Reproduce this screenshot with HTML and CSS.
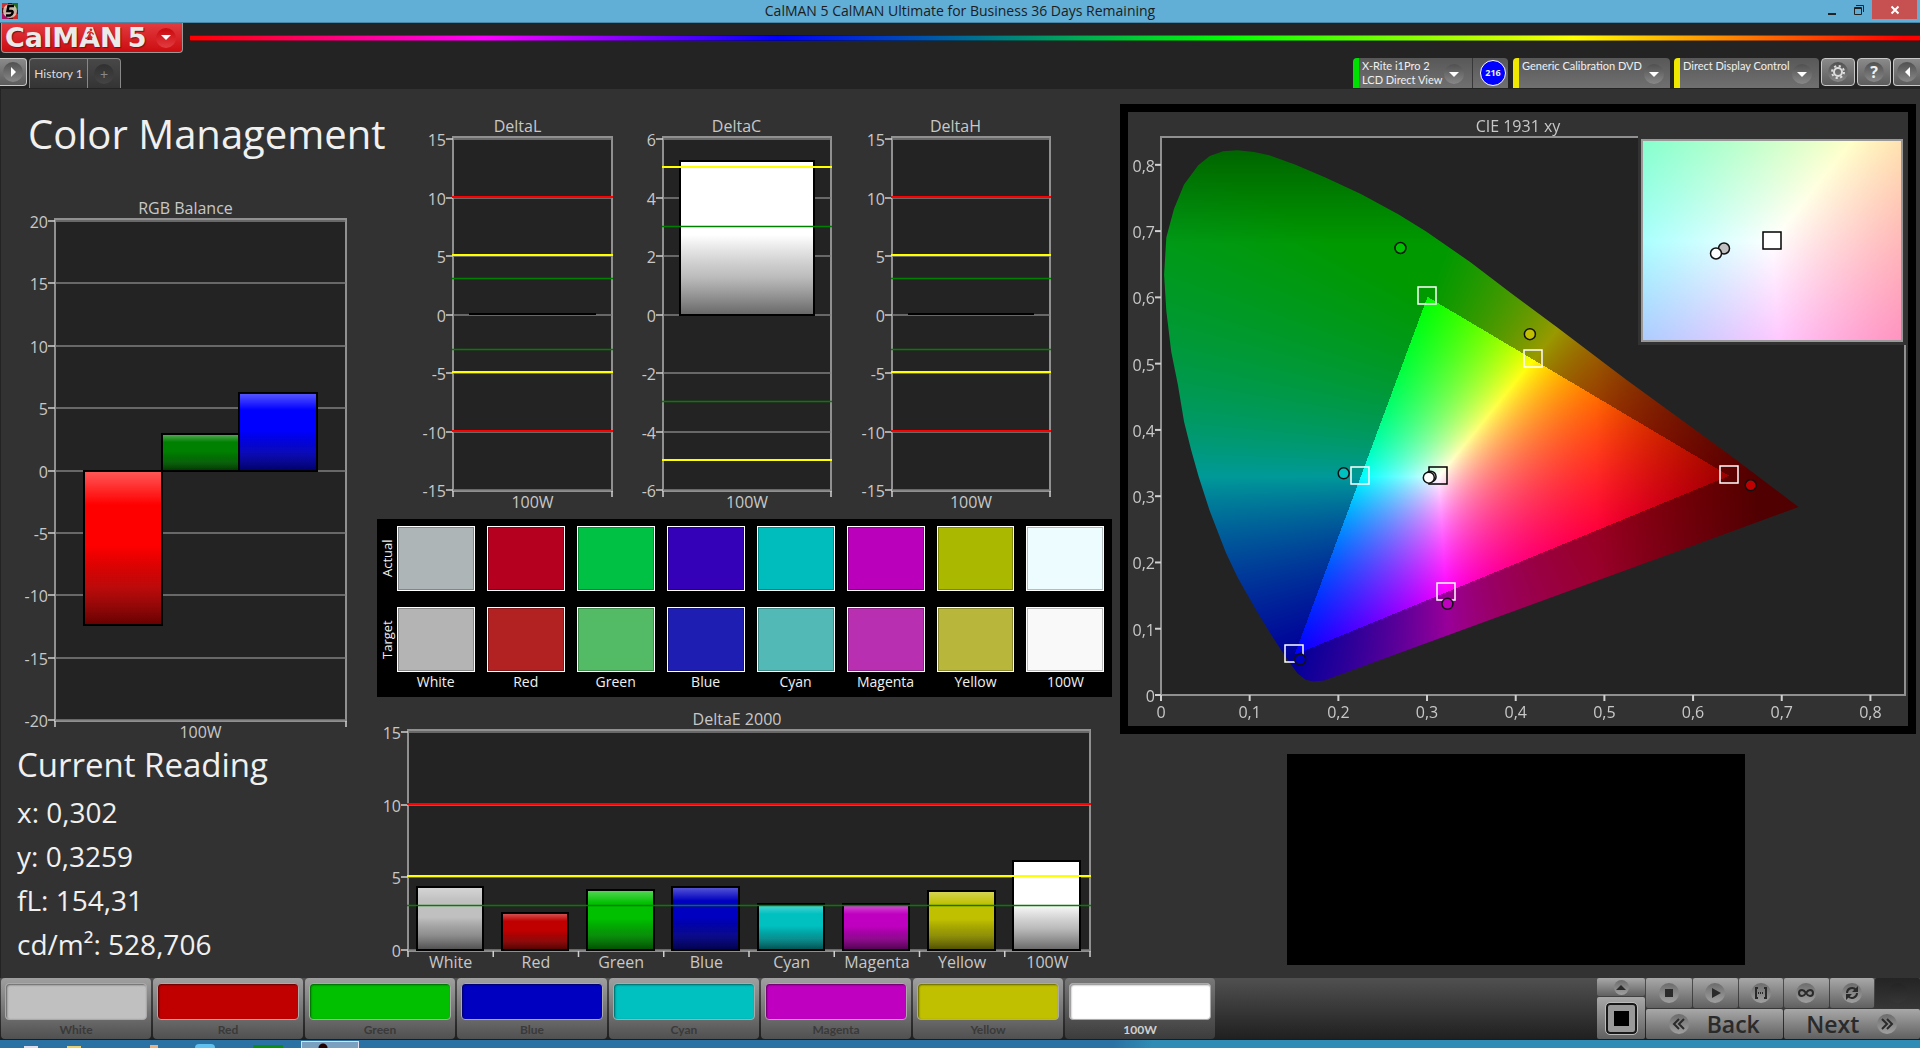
FILE: index.html
```html
<!DOCTYPE html>
<html lang="en">
<head>
    <meta charset="UTF-8">
    <meta name="viewport" content="width=device-width, initial-scale=1.0">
    <title>CalMAN 5 CalMAN Ultimate for Business 36 Days Remaining</title>
    <link rel="stylesheet" href="styles.css">
</head>
<body>

<div class="titlebar">
    <svg class="app-icon" viewBox="0 0 16 16"><rect width="16" height="16" fill="#511"/><path d="M0 0h6v5H0z" fill="#c33"/><path d="M10 0h6v7h-6z" fill="#286b25"/><path d="M0 10h7v6H0z" fill="#a16"/><path d="M11 11h5v5h-5z" fill="#c22"/><circle cx="8" cy="8" r="7" fill="#e8d8c8" opacity=".8"/><path d="M12 3H6.500L5.500 8h4q1.500 0 1 2t-2.500 2.500H4" fill="none" stroke="#000" stroke-width="2.500"/></svg>
    <span class="window-title">CalMAN 5 CalMAN Ultimate for Business 36 Days Remaining</span>
    <div class="window-buttons">
        <button aria-label="Minimize"><svg width="10" height="16"><path d="M1 12h8" stroke="#222" stroke-width="2"/></svg></button>
        <button aria-label="Restore"><svg width="12" height="14"><path d="M1.500 4.500h7v7h-7zM1 5.500h8M3 2.500h7.500V9" fill="none" stroke="#222"/></svg></button>
        <button class="close" aria-label="Close"><svg width="10" height="10"><path d="M1.500 1.500l7 7m0-7l-7 7" stroke="#fff" stroke-width="2"/></svg></button>
    </div>
</div>

<header>
    <div class="brand-row">
        <button class="logo">
            <span class="logo-text">CalMAN</span><span class="logo-text five">5</span>
            <svg class="runner" viewBox="0 0 12 14"><circle cx="7" cy="2" r="1.500" fill="#d42a2a"/><path d="M7 4L5 8l3 2-1 3M5 8l-2 3H1M3 6l2-2 3 1 2 2" fill="none" stroke="#d42a2a" stroke-width="1.500"/></svg>
            <span class="round red"><i class="down"></i></span>
        </button>
        <div class="rainbow"></div>
    </div>
    <div class="tool-row">
        <button class="square-btn side left" aria-label="Open panel"><span class="round"><i class="right"></i></span></button>
        <div class="tabs">
            <button class="tab">History 1</button>
            <button class="tab add" aria-label="Add tab"><span class="round">+</span></button>
        </div>
        <div class="devices">
            <button class="device meter"><span class="device-name">X-Rite i1Pro 2<br>LCD Direct View</span><span class="round"><i class="down"></i></span></button>
            <span class="count"><b>216</b></span>
            <button class="device source"><span class="device-name">Generic Calibration DVD</span><span class="round"><i class="down"></i></span></button>
            <button class="device display"><span class="device-name">Direct Display Control</span><span class="round"><i class="down"></i></span></button>
            <button class="square-btn" aria-label="Settings"><span class="round"><svg width="16" height="16" viewBox="0 0 16 16"><circle cx="8" cy="8" r="4" fill="none" stroke="#ddd" stroke-width="2"/><circle cx="8" cy="8" r="6" fill="none" stroke="#ddd" stroke-width="2" stroke-dasharray="2.200 2.512"/></svg></span></button>
            <button class="square-btn" aria-label="Help"><span class="round help">?</span></button>
            <button class="square-btn side" aria-label="Collapse"><span class="round"><i class="back"></i></span></button>
        </div>
    </div>
</header>

<main>
    <section class="col-left">
        <h1>Color Management</h1>
        <div class="chart" id="rgb"></div>
        <div class="reading">
            <h2>Current Reading</h2>
            <p>x: 0,302</p>
            <p>y: 0,3259</p>
            <p>fL: 154,31</p>
            <p>cd/m²: 528,706</p>
        </div>
    </section>

    <section class="col-mid">
        <div class="deltas">
            <div class="chart" id="deltaL"></div>
            <div class="chart" id="deltaC"></div>
            <div class="chart" id="deltaH"></div>
        </div>
        <div class="swatches" id="swatches">
            <span class="side-label">Actual</span>
        </div>
        <div class="chart" id="deltaE"></div>
    </section>

    <section class="col-right">
        <div class="cie" id="cie">
            <canvas></canvas>
            <div class="inset"><canvas></canvas></div>
        </div>
        <div class="preview"></div>
    </section>
</main>

<footer>
    <div class="patches" id="patches"></div>
    <div class="pattern">
        <button class="pattern-up" aria-label="Show more"><span class="round"><i class="up"></i></span></button>
        <button class="pattern-window" aria-label="Pattern window"><span></span></button>
    </div>
    <div class="controls">
        <div class="transport">
            <button aria-label="Stop"><span class="round"><svg width="20" height="20"><path d="M6 6h8v8H6z" fill="#2a2a2a"/></svg></span></button>
            <button aria-label="Play"><span class="round"><svg width="20" height="20"><path d="M7 5l9 5-9 5z" fill="#2a2a2a"/></svg></span></button>
            <button aria-label="Read series"><span class="round"><svg width="20" height="20"><path d="M7 5H5v10h2M13 5h2v10h-2" fill="none" stroke="#2a2a2a" stroke-width="2"/><path d="M7 10h6" stroke="#2a2a2a" stroke-width="2" stroke-dasharray="1 1"/></svg></span></button>
            <button aria-label="Continuous"><span class="round"><svg width="20" height="20"><path d="M10 10c-2-3-3-3-4-3a3 3 0 0 0 0 6c1 0 2 0 4-3s3-3 4-3a3 3 0 0 1 0 6c-1 0-2 0-4-3z" fill="none" stroke="#2a2a2a" stroke-width="2"/></svg></span></button>
            <button aria-label="Refresh"><span class="round"><svg width="20" height="20"><path d="M5 10a5 5 0 0 1 9-3M15 10a5 5 0 0 1-9 3" fill="none" stroke="#2a2a2a" stroke-width="2"/><path d="M16 3v6h-6zM4 17v-6h6z" fill="#2a2a2a"/></svg></span></button>
            <button class="off" aria-label="Record" disabled><span class="round"></span></button>
        </div>
        <div class="steps">
            <button><span class="round"><svg width="20" height="20"><path d="M10 5l-5 5 5 5M15 5l-5 5 5 5" fill="none" stroke="#2a2a2a" stroke-width="2"/></svg></span>Back</button>
            <button>Next<span class="round"><svg width="20" height="20"><path d="M5 5l5 5-5 5M10 5l5 5-5 5" fill="none" stroke="#2a2a2a" stroke-width="2"/></svg></span></button>
        </div>
    </div>
</footer>

<div class="taskbar">
    <i class="task t1"></i><i class="task t2"></i><i class="task t3"></i><i class="task t4"></i><i class="task t5"></i><i class="task active"></i>
</div>

<script src="script.js"></script>
</body>
</html>
```
FILE: styles.css
```css
* {
    box-sizing: border-box;
}
body {
    margin: 0;
    min-height: 100vh;
    display: flex;
    flex-direction: column;
    overflow: hidden;
    background: #323232;
    color: #f0f0f0;
    font-family: "Open Sans", "Noto Sans", sans-serif;
}
button {
    border: 0;
    margin: 0;
    padding: 0;
    background: none;
    color: inherit;
    font-family: inherit;
}

/* window title */
.titlebar {
    height: 23px;
    display: flex;
    align-items: center;
    background: #61aed6;
    border-bottom: 1px solid #4a86a6;
    padding: 0 3px 0 2px;
}
.app-icon {
    width: 16px;
    height: 16px;
}
.window-title {
    flex: 1;
    text-align: center;
    font-size: 14px;
    line-height: 20px;
    color: #1c1c1c;
    padding-left: 84px;
}
.window-buttons {
    display: flex;
    align-self: flex-start;
    height: 19px;
}
.window-buttons button {
    width: 27px;
    display: flex;
    justify-content: center;
    align-items: center;
}
.window-buttons .close {
    width: 45px;
    background: #c75050;
}

/* header */
header {
    background: #232323;
    height: 66px;
}
.brand-row {
    display: flex;
    gap: 7px;
    height: 35px;
}
.logo {
    position: relative;
    display: flex;
    align-items: center;
    width: 182px;
    height: 30px;
    margin-left: 1px;
    padding: 0 6px 0 3px;
    border: 1px solid #999;
    border-top: 0;
    border-radius: 0 0 4px 4px;
    background: linear-gradient(#e23c40, #cc0c10);
}
.logo-text {
    font: bold 27px/26px "DejaVu Sans", sans-serif;
    color: #eaeaea;
    text-shadow: 1px 1px 1px #7a1010;
}
.five {
    margin-left: 5px;
}
.runner {
    position: absolute;
    left: 82px;
    top: 5px;
    width: 12px;
    height: 13px;
}
.rainbow {
    flex: 1;
    height: 6px;
    margin-top: 12px;
    border-top: 1px solid rgba(0, 0, 0, 0.4);
    border-bottom: 1px solid rgba(0, 0, 0, 0.4);
    background: linear-gradient(90deg, #f00, #f0f 17%, #00f 34%, #0f0 60%, #ff0 80%, #f00 99%);
}
.round {
    display: inline-flex;
    align-items: center;
    justify-content: center;
    flex: none;
    width: 20px;
    height: 20px;
    border-radius: 50%;
    background: linear-gradient(#505050, #888);
}
.round.red {
    margin-left: auto;
    background: linear-gradient(#c8080c, #e23c40);
}
.down, .up, .right, .back {
    border: 5px solid transparent;
}
.down {
    border-top-color: #fff;
    border-bottom: 0;
}
.up {
    border-bottom-color: #2a2a2a;
    border-top: 0;
}
.right {
    border-left-color: #fff;
    border-right: 0;
}
.back {
    border-right-color: #fff;
    border-left: 0;
}
.tool-row {
    display: flex;
    height: 31px;
}
.square-btn {
    width: 34px;
    height: 28px;
    display: flex;
    align-items: center;
    justify-content: center;
    border: 1px solid #c8c8c8;
    border-radius: 4px;
    background: linear-gradient(#8a8a8a, #5c5c5c);
}
.square-btn.side {
    width: 27px;
    border-right: 0;
    border-radius: 4px 0 0 4px;
}
.square-btn.left {
    border-right: 1px solid #c8c8c8;
    border-left: 0;
    border-radius: 0 4px 4px 0;
}
.help {
    font-size: 16px;
    font-weight: bold;
}
.tabs {
    display: flex;
    margin-left: 2px;
    height: 30px;
    border: 1px solid #888;
    border-bottom: 0;
    border-radius: 4px 4px 0 0;
    background: linear-gradient(#484848, #343434);
}
.tab {
    width: 57px;
    font: 12px Lato, sans-serif;
    color: #ddd;
}
.tab.add {
    width: 33px;
    border-left: 1px solid #888;
    color: #888;
    font-size: 14px;
}
.tab.add .round {
    background: linear-gradient(#303030, #444);
}
.devices {
    display: flex;
    margin-left: auto;
    gap: 2px;
}
.device {
    display: flex;
    gap: 2px;
    height: 30px;
    padding: 0 9px 0 3px;
    border-left: 6px solid #f0e800;
    border-radius: 4px 4px 0 0;
    background: linear-gradient(#585858, #707070);
}
.device-name {
    flex: 1;
    font: 11px/14px Lato, sans-serif;
    text-align: left;
    white-space: nowrap;
    padding-top: 1px;
}
.device .round {
    margin-top: 6px;
}
.meter {
    width: 119px;
    padding-right: 12px;
    border-left-color: #00e000;
    border-radius: 4px 0 0 0;
}
.count {
    width: 36px;
    height: 30px;
    margin: 0 3px 0 -2px;
    padding: 2px 0 0 7px;
    border-left: 1px solid #383838;
    border-radius: 0 4px 0 0;
    background: linear-gradient(#585858, #707070);
}
.count b {
    display: block;
    width: 26px;
    height: 26px;
    border: 1px solid #fff;
    border-radius: 50%;
    background: #00f;
    font-size: 9px;
    line-height: 24px;
    text-align: center;
}
.source {
    width: 157px;
    margin-right: 2px;
}
.display {
    width: 145px;
}

/* page */
main {
    flex: 1;
    display: grid;
    grid-template-columns: minmax(0, 370fr) minmax(0, 750fr) minmax(0, 800fr);
    border-left: 1px solid #232323;
}
h1 {
    margin: 18px 0 0;
    padding-left: 27px;
    font-size: 40px;
    line-height: 54px;
    font-weight: normal;
    white-space: nowrap;
}
.chart svg {
    display: block;
    overflow: visible;
}
.chart text, .cie text {
    font-size: 16px;
    fill: #c8c8c8;
}
#rgb {
    margin: 37px 13px 0 12px;
    height: 547px;
}
.reading {
    padding-left: 16px;
}
h2 {
    margin: 0 0 5px;
    font-size: 33px;
    line-height: 40px;
    font-weight: normal;
}
.reading p {
    margin: 0;
    font-size: 28px;
    line-height: 44px;
}
.deltas {
    display: grid;
    grid-template-columns: repeat(3, 1fr);
    margin: 27px 55px 0 37px;
}
.deltas .chart {
    height: 403px;
}
.swatches {
    display: grid;
    grid-template-columns: 7px repeat(8, 1fr);
    column-gap: 12px;
    row-gap: 16px;
    margin: 0 8px 0 6px;
    padding: 7px 8px 5px 1px;
    background: #000;
}
.swatch {
    height: 65px;
    border: 1px solid #fff;
    box-shadow: inset 0 0 0 1px rgba(0, 0, 0, 0.25);
}
.side-label {
    writing-mode: vertical-rl;
    transform: rotate(180deg);
    margin-right: -12px;
    text-align: center;
    font-size: 13px;
    line-height: 18px;
}
.swatch-name {
    margin-top: -16px;
    font-size: 14px;
    line-height: 20px;
    text-align: center;
}
#deltaE {
    height: 269px;
    margin: 12px 27px 0 9px;
}
.col-right {
    padding-right: 4px;
}
.cie {
    position: relative;
    height: 630px;
    margin-top: 15px;
    border: 8px solid #000;
}
.cie > canvas, .cie > svg {
    position: absolute;
    left: 0;
    top: 0;
}
.inset {
    position: absolute;
    right: 2px;
    top: 24px;
    width: 268px;
    height: 209px;
    border: 3px solid #323232;
}
.inset canvas {
    display: block;
    border: 2px solid #999;
}
.inset svg {
    position: absolute;
    left: 0;
    top: 0;
}
.preview {
    width: 458px;
    height: 211px;
    margin: 20px 171px 0 auto;
    background: #000;
}

/* bottom bar */
footer {
    display: flex;
    height: 62px;
    background: linear-gradient(#505050, #202020);
    border-bottom: 1px solid #1c1c1c;
}
.patches {
    flex: 1;
    display: flex;
    gap: 2px;
    padding-left: 1px;
}
.patch {
    width: 150px;
    height: 61px;
    padding: 5px 4px 0;
    border-radius: 4px;
    background: linear-gradient(#a0a0a0, #505050);
    color: #3a3a3a;
    font: bold 12px/20px Lato, sans-serif;
}
.patch span {
    display: block;
    height: 37px;
    border: 1px solid #aaa;
    border-radius: 4px;
    box-shadow: inset 1px 1px 2px rgba(0, 0, 0, 0.5);
}
.patch.selected {
    background: linear-gradient(#787878, #3c3c3c);
    color: #d0d0d0;
}
.pattern {
    width: 48px;
    display: flex;
    flex-direction: column;
    gap: 1px;
    margin-right: 1px;
}
.pattern button, .controls button {
    display: flex;
    align-items: center;
    justify-content: center;
    border-radius: 2px;
    background: linear-gradient(#a8a8a8, #606060);
}
.pattern-up {
    height: 18px;
}
.pattern-up .round {
    width: 15px;
    height: 15px;
}
.pattern-window {
    flex: 1;
}
.pattern-window span {
    width: 31px;
    height: 31px;
    padding: 6px;
    border: 2px solid #181818;
    outline: 1px solid #bbb;
    border-radius: 4px;
    background: #000 content-box;
    box-shadow: inset 0 0 0 6px #999;
}
.controls {
    width: 274px;
    display: flex;
    flex-direction: column;
    gap: 1px;
}
.transport, .steps {
    display: grid;
    gap: 1px;
    height: 30px;
}
.transport {
    grid-template-columns: 46px repeat(5, 1fr);
}
.steps {
    grid-template-columns: 1fr 1fr;
}
.controls .round, .pattern-up .round {
    background: linear-gradient(#6c6c6c, #a0a0a0);
}
.controls .steps button {
    gap: 18px;
    font-size: 23px;
    line-height: 30px;
    font-weight: 600;
    color: #2a2a2a;
}
.controls .off, .controls .off .round {
    background: linear-gradient(#242424, #363636);
}
.taskbar {
    height: 8px;
    display: flex;
    align-items: flex-end;
    overflow: hidden;
    padding-left: 24px;
    background: linear-gradient(100deg, #2a72a4 58%, #2f8cb4 60%);
}
.task {
    width: 14px;
    height: 2px;
    background: #dde;
}
.t2 {
    margin-left: 29px;
    background: #e8d070;
}
.t3 {
    width: 8px;
    height: 3px;
    margin-left: 69px;
    background: #e8b080;
}
.t4 {
    width: 20px;
    height: 4px;
    margin-left: 37px;
    border-radius: 8px 8px 0 0;
    background: #60c0f0;
}
.t5 {
    width: 30px;
    height: 3px;
    margin-left: 38px;
    background: #0a9010;
}
.task.active {
    width: 58px;
    height: 7px;
    margin-left: 18px;
    border: 1px solid #dde;
    border-bottom: 0;
    background: radial-gradient(circle at 21px 6px, #200 4px, #7aa0c0 5px);
}
```
FILE: script.js
```js
const names = ['White', 'Red', 'Green', 'Blue', 'Cyan', 'Magenta', 'Yellow', '100W'];
const colors = ['#c0c0c0', '#c00000', '#00c000', '#0000c0', '#00c0c0', '#c000c0', '#c0c000', '#ffffff'];
const actual = ['#adb5b7', '#b5001f', '#00c144', '#3400b8', '#00bdbd', '#bb00bb', '#abb800', '#ecfcff'];
const target = ['#b4b4b4', '#b22222', '#53bb66', '#1e1eb2', '#53b9b7', '#b82fb2', '#b8b73c', '#f9f9f9'];

const fivePlus = [[10, '#ff0000'], [5, '#ffff00'], [3, '#008000'], [-3, '#008000'], [-5, '#ffff00'], [-10, '#ff0000']];

const charts = {
    rgb: { title: 'RGB Balance', max: 20, min: -20, step: 5, left: 42, right: 12, bottom: 24, cats: ['100W'],
        bars: [[0.1, 0.367, -12.4, '#ff0000'], [0.367, 0.633, 2.9, '#008000'], [0.633, 0.9, 6.2, '#0000ff']], limits: [] },
    deltaL: { title: 'DeltaL', max: 15, min: -15, step: 5, left: 45, right: 15, bottom: 28, cats: ['100W'],
        bars: [[0.1, 0.9, 0, '#000']], limits: fivePlus },
    deltaC: { title: 'DeltaC', max: 6, min: -6, step: 2, left: 36, right: 15, bottom: 28, cats: ['100W'],
        bars: [[0.1, 0.9, 5.25, '#ffffff']], limits: [[5, '#ffff00'], [3, '#008000'], [-3, '#008000'], [-5, '#ffff00']] },
    deltaH: { title: 'DeltaH', max: 15, min: -15, step: 5, left: 46, right: 15, bottom: 28, cats: ['100W'],
        bars: [[0.1, 0.9, 0, '#000']], limits: fivePlus },
    deltaE: { title: 'DeltaE 2000', max: 15, min: 0, step: 5, left: 28, right: 4, bottom: 27, cats: names,
        bars: [4.35, 2.53, 4.15, 4.35, 3.18, 3.18, 4.05, 6.13].map((v, i) => [(i + 0.1) / 8, (i + 0.88) / 8, v, colors[i]]),
        limits: [[10, '#ff0000'], [5, '#ffff00'], [3, '#008000']] }
};

function line(x1, y1, x2, y2, color, w) {
    return `<line x1="${x1}" y1="${y1}" x2="${x2}" y2="${y2}" stroke="${color}" stroke-width="${w}"/>`;
}

function drawChart(id) {
    const c = charts[id];
    const el = document.getElementById(id);
    const W = el.clientWidth, H = el.clientHeight;
    const x0 = c.left, x1 = W - c.right, y0 = 21, y1 = H - c.bottom;
    const Y = v => Math.round(y0 + 2 + (c.max - v) / (c.max - c.min) * (y1 - y0 - 3));
    let s = `<svg width="${W}" height="${H}"><defs><linearGradient id="gloss-${id}" x2="0" y2="1">
        <stop offset="0" stop-color="#fff" stop-opacity=".35"/><stop offset=".22" stop-color="#fff" stop-opacity="0"/>
        <stop offset=".48" stop-color="#000" stop-opacity="0"/><stop offset=".75" stop-color="#222" stop-opacity=".3"/>
        <stop offset="1" stop-color="#000" stop-opacity=".6"/></linearGradient></defs>`;
    s += `<text x="${W / 2}" y="16" text-anchor="middle">${c.title}</text>`;
    s += `<rect x="${x0}" y="${y0}" width="${x1 - x0}" height="${y1 - y0}" fill="#232323" stroke="#909090" stroke-width="2"/>`;
    for (let v = c.max; v >= c.min; v -= c.step) {
        s += line(x0, Y(v), x1, Y(v), '#808080', 1.5) + line(x0 - 7, Y(v), x0, Y(v), '#d0d0d0', 1.5);
        s += `<text x="${x0 - 7}" y="${Y(v) + 7}" text-anchor="end">${v}</text>`;
    }
    for (const [a, b, v, color] of c.bars) {
        const left = Math.round(x0 + a * (x1 - x0)), right = Math.round(x0 + b * (x1 - x0));
        const top = Math.min(Y(v), Y(0)), h = Math.abs(Y(v) - Y(0));
        if (!h) {
            s += line(left, Y(0) - 1, right, Y(0) - 1, '#000', 2);
            continue;
        }
        s += `<rect x="${left}" y="${top}" width="${right - left}" height="${h}" fill="${color}"/>`;
        s += `<rect x="${left}" y="${top}" width="${right - left}" height="${h}" fill="url(#gloss-${id})" stroke="#000" stroke-width="2"/>`;
    }
    for (const [v, color] of c.limits) {
        const thin = v === 3 || v === -3;
        s += line(x0 - 1, Y(v) - (thin ? 0.5 : 1), x1 + 1, Y(v) - (thin ? 0.5 : 1), color, thin ? 1.4 : 2);
    }
    const n = c.cats.length, step = (x1 - x0) / n;
    for (let i = 0; i <= n; i++) {
        s += line(x0 + i * step, y1, x0 + i * step, y1 + 6, '#d0d0d0', 1.5);
    }
    c.cats.forEach((t, i) => {
        s += `<text x="${x0 + (i + 0.5) * step}" y="${y1 + 17}" text-anchor="middle">${t}</text>`;
    });
    el.innerHTML = s + '</svg>';
}

/* chromaticity diagram */
const locus = [[.719, .282], [.641, .361], [.524, .475], [.447, .553], [.396, .6036], [.349, .6516], [.299, .698],
    [.268, .7237], [.226, .754], [.186, .779], [.151, .799], [.122, .813], [.105, .818], [.086, .8205], [.070, .819], [.055, .812],
    [.042, .798], [.026, .769], [.0146, .732], [.006, .689], [.0035, .633], [.006, .578], [.0116, .516], [.019, .467],
    [.026, .411], [.034, .368], [.0425, .328], [.055, .276], [.073, .214], [.086, .177], [.108, .125], [.125, .088],
    [.140, .057], [.154, .031], [.163, .0216], [.172, .019], [.184, .0205]];
const squares = [[.64, .33], [.3, .6], [.15, .06], [.2246, .3287], [.3209, .1542], [.4193, .5053]];
const dots = [[.270, .673, '#00c000'], [.416, .543, '#c0c000'], [.206, .333, '#00c0c0'], [.665, .315, '#c00000'],
    [.323, .136, '#c000c0'], [.157, .052, '#0000c0'], [.304, .328, '#c0c0c0'], [.302, .3265, '#fff']];

function xyColor(x, y) {
    y = Math.max(y, 0.001);
    const X = x / y, Z = (1 - x - y) / y;
    const raw = [3.2406 * X - 1.5372 - 0.4986 * Z, -0.9689 * X + 1.8758 + 0.0415 * Z, 0.0557 * X - 0.2040 + 1.0570 * Z];
    const inside = Math.min(...raw) >= 0;
    const rgb = raw.map(v => Math.max(v, 0));
    const m = Math.max(...rgb);
    let k = inside ? 255 : 153;
    if (x > 0.49) k *= 1 - Math.min((x - 0.49) * 2.6, 0.48);
    if (y > 0.68) k *= 1 - (y - 0.68) * 2.4;
    return rgb.map(v => v / m * k);
}

function paint(canvas, w, h, toXY) {
    canvas.width = w;
    canvas.height = h;
    const ctx = canvas.getContext('2d');
    const img = ctx.createImageData(w, h);
    for (let j = 0; j < h; j++) {
        for (let i = 0; i < w; i++) {
            const c = xyColor(...toXY(i, j));
            const p = (j * w + i) * 4;
            img.data[p] = c[0];
            img.data[p + 1] = c[1];
            img.data[p + 2] = c[2];
            img.data[p + 3] = 255;
        }
    }
    ctx.putImageData(img, 0, 0);
    return ctx;
}

function drawCie() {
    const el = document.getElementById('cie');
    const W = el.clientWidth, H = el.clientHeight;
    const x0 = 33, x1 = W - 3, y0 = 25, y1 = H - 31;
    const X = v => x0 + v / 0.839 * (x1 - x0), Y = v => y1 - 1 - v / 0.842 * (y1 - y0);
    const path = locus.map(p => X(p[0]) + ' ' + Y(p[1]));
    const ctx = paint(el.querySelector('canvas'), W, H, (i, j) => [(i - x0) / (x1 - x0) * 0.839, (y1 - 1 - j) / (y1 - y0) * 0.842]);
    ctx.globalCompositeOperation = 'destination-in';
    ctx.fill(new Path2D('M' + path.join('L') + 'Z'));
    ctx.globalCompositeOperation = 'destination-over';
    ctx.fillStyle = '#232323';
    ctx.fillRect(x0, y0, x1 - x0, y1 - y0);

    let s = `<svg width="${W}" height="${H}"><text x="${W / 2}" y="20" text-anchor="middle">CIE 1931 xy</text>`;
    s += `<rect x="${x0}" y="${y0}" width="${x1 - x0}" height="${y1 - y0}" fill="none" stroke="#909090" stroke-width="2"/>`;
    for (let i = 0; i < 9; i++) {
        const t = i ? '0,' + i : '0';
        s += line(X(i / 10), y1, X(i / 10), y1 + 6, '#d0d0d0', 2) + line(x0 - 6, Y(i / 10) + 1, x0, Y(i / 10) + 1, '#d0d0d0', 2);
        s += `<text x="${X(i / 10)}" y="${y1 + 23}" text-anchor="middle">${t}</text>`;
        s += `<text x="${x0 - 6}" y="${Y(i / 10) + 8}" text-anchor="end">${t}</text>`;
    }
    squares.forEach(p => s += square(X(p[0]), Y(p[1]), '#fff', 'none'));
    s += square(X(.3127), Y(.329), '#000', 'none');
    dots.forEach(p => s += dot(X(p[0]), Y(p[1]), p[2]));
    el.querySelector(':scope > svg')?.remove();
    el.querySelector('canvas').insertAdjacentHTML('afterend', s + '</svg>');

    // zoomed view round the white point
    const inset = el.querySelector('.inset');
    const w = inset.clientWidth - 4, h = inset.clientHeight - 4;
    paint(inset.querySelector('canvas'), w, h, (i, j) => [.3127 + (i - w / 2) / 5250, .329 - (j - h / 2) / 4000]);
    inset.querySelector('svg')?.remove();
    inset.insertAdjacentHTML('beforeend', `<svg width="${w + 4}" height="${h + 4}">` + square(w / 2 + 2, h / 2 + 2, '#000', '#fff') +
        dot(w / 2 - 46, h / 2 + 10, '#c0c0c0') + dot(w / 2 - 54, h / 2 + 15, '#fff') + '</svg>');
}

function square(x, y, stroke, fill) {
    return `<rect x="${Math.round(x) - 9}" y="${Math.round(y) - 9}" width="18" height="17" fill="${fill}" stroke="${stroke}" stroke-width="1.5"/>`;
}

function dot(x, y, fill) {
    return `<circle cx="${x}" cy="${y}" r="5.5" fill="${fill}" stroke="#111" stroke-width="1.5"/>`;
}

const sw = document.getElementById('swatches');
const cell = c => `<div class="swatch" style="background:${c}"></div>`;
sw.innerHTML += actual.map(cell).join('') + '<span class="side-label">Target</span>' + target.map(cell).join('') +
    '<span></span>' + names.map(n => `<div class="swatch-name">${n}</div>`).join('');

document.getElementById('patches').innerHTML = names.map((n, i) =>
    `<button class="patch${i === 7 ? ' selected' : ''}"><span style="background:${colors[i]}"></span>${n}</button>`).join('');

function drawAll() {
    Object.keys(charts).forEach(drawChart);
    drawCie();
}
drawAll();
window.addEventListener('resize', drawAll);
```
